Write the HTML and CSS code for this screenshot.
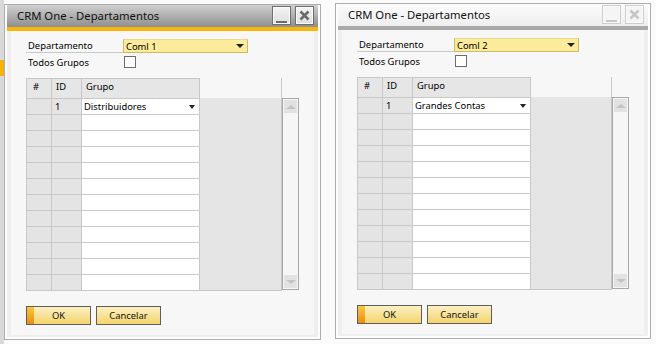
FILE: index.html
```html
<!DOCTYPE html>
<html lang="pt">
<head>
    <meta charset="UTF-8">
    <meta name="viewport" content="width=device-width, initial-scale=1.0">
    <title>CRM One - Departamentos</title>
    <link rel="stylesheet" href="styles.css">
</head>
<body>
    <div class="behind"><span class="behind-tab"></span></div>

    <!-- janela ativa -->
    <div class="win win-left">
        <div class="titlebar">
            <span class="title">CRM One - Departamentos</span>
            <span class="tbtn"><i class="min"></i></span>
            <span class="tbtn">
                <svg width="11" height="11" viewBox="0 0 11 11"><path d="M1.5 1.5 L9.5 9.5 M9.5 1.5 L1.5 9.5" stroke="currentColor" stroke-width="2.6" fill="none"/></svg>
            </span>
        </div>
        <div class="frame">
            <div class="panel">
                <div class="field">
                    <span class="lbl lbl-line">Departamento</span>
                    <div class="combo"><span>Coml 1</span><i class="arrow"></i></div>
                </div>
                <div class="field field-check">
                    <span class="lbl">Todos Grupos</span>
                    <span class="check"></span>
                </div>
                <div class="matrix">
                    <div class="cells">
                        <div class="hd hd-num">#</div><div class="hd">ID</div><div class="hd">Grupo</div>
                        <div class="rh"></div><div class="rh">1</div><div class="cell"><span>Distribuidores</span><i class="arrow arrow-sm"></i></div>
                        <div class="rh"></div><div class="rh"></div><div class="cell"></div>
                        <div class="rh"></div><div class="rh"></div><div class="cell"></div>
                        <div class="rh"></div><div class="rh"></div><div class="cell"></div>
                        <div class="rh"></div><div class="rh"></div><div class="cell"></div>
                        <div class="rh"></div><div class="rh"></div><div class="cell"></div>
                        <div class="rh"></div><div class="rh"></div><div class="cell"></div>
                        <div class="rh"></div><div class="rh"></div><div class="cell"></div>
                        <div class="rh"></div><div class="rh"></div><div class="cell"></div>
                        <div class="rh"></div><div class="rh"></div><div class="cell"></div>
                        <div class="rh"></div><div class="rh"></div><div class="cell"></div>
                        <div class="rh"></div><div class="rh"></div><div class="cell"></div>
                    </div>
                    <div class="blank"><div class="blank-head"></div><div class="blank-body"></div></div>
                    <div class="vscroll">
                        <span class="sb-btn"><i class="sb-up"></i></span>
                        <span class="sb-btn"><i class="sb-down"></i></span>
                    </div>
                </div>
                <div class="actions">
                    <button class="btn btn-ok">OK</button>
                    <button class="btn">Cancelar</button>
                </div>
            </div>
        </div>
    </div>

    <!-- janela inativa -->
    <div class="win win-right inactive">
        <div class="titlebar">
            <span class="title">CRM One - Departamentos</span>
            <span class="tbtn"><i class="min"></i></span>
            <span class="tbtn">
                <svg width="11" height="11" viewBox="0 0 11 11"><path d="M1.5 1.5 L9.5 9.5 M9.5 1.5 L1.5 9.5" stroke="currentColor" stroke-width="2.6" fill="none"/></svg>
            </span>
        </div>
        <div class="frame">
            <div class="panel">
                <div class="field">
                    <span class="lbl lbl-line">Departamento</span>
                    <div class="combo"><span>Coml 2</span><i class="arrow"></i></div>
                </div>
                <div class="field field-check">
                    <span class="lbl">Todos Grupos</span>
                    <span class="check"></span>
                </div>
                <div class="matrix">
                    <div class="cells">
                        <div class="hd hd-num">#</div><div class="hd">ID</div><div class="hd">Grupo</div>
                        <div class="rh"></div><div class="rh">1</div><div class="cell"><span>Grandes Contas</span><i class="arrow arrow-sm"></i></div>
                        <div class="rh"></div><div class="rh"></div><div class="cell"></div>
                        <div class="rh"></div><div class="rh"></div><div class="cell"></div>
                        <div class="rh"></div><div class="rh"></div><div class="cell"></div>
                        <div class="rh"></div><div class="rh"></div><div class="cell"></div>
                        <div class="rh"></div><div class="rh"></div><div class="cell"></div>
                        <div class="rh"></div><div class="rh"></div><div class="cell"></div>
                        <div class="rh"></div><div class="rh"></div><div class="cell"></div>
                        <div class="rh"></div><div class="rh"></div><div class="cell"></div>
                        <div class="rh"></div><div class="rh"></div><div class="cell"></div>
                        <div class="rh"></div><div class="rh"></div><div class="cell"></div>
                        <div class="rh"></div><div class="rh"></div><div class="cell"></div>
                    </div>
                    <div class="blank"><div class="blank-head"></div><div class="blank-body"></div></div>
                    <div class="vscroll">
                        <span class="sb-btn"><i class="sb-up"></i></span>
                        <span class="sb-btn"><i class="sb-down"></i></span>
                    </div>
                </div>
                <div class="actions">
                    <button class="btn btn-ok">OK</button>
                    <button class="btn">Cancelar</button>
                </div>
            </div>
        </div>
    </div>
</body>
</html>
```

FILE: styles.css
```css
*{
    margin: 0;
    padding: 0;
    box-sizing: border-box;
}
body{
    width: 656px;
    height: 344px;
    position: relative;
    overflow: hidden;
    background: #fbfbfb;
    font-family: "Noto Sans", "Liberation Sans", sans-serif;
    font-size: 9.4px;
    color: #000;
}
/* janela atras, so a borda aparece */
.behind{
    position: absolute;
    left: 0;
    top: 0;
    width: 4px;
    height: 344px;
    background: #d9d9d9;
}
.behind-tab{
    display: block;
    margin-top: 60px;
    height: 16px;
    background: #f4b30c;
}
.win{
    position: absolute;
    width: 317px;
    height: 336px;
    border: 1px solid #adadad;
    background: #fdfdfd;
    padding: 0 2px 2px;
    display: flex;
    flex-direction: column;
}
.win-left{
    left: 4px;
    top: 4px;
}
.win-right{
    left: 335px;
    top: 3px;
    width: 316px;
}
.titlebar{
    height: 26px;
    display: flex;
    align-items: flex-start;
    gap: 4px;
    padding-right: 4px;
    background: linear-gradient(#d0d0d0, #8e8e8e);
    border-bottom: 4px solid #f7b60c;
}
.title{
    flex: 1;
    padding-left: 10px;
    line-height: 22px;
    font-size: 11.3px;
    color: #111;
}
.tbtn{
    width: 19px;
    height: 19px;
    margin-top: 1px;
    border: 1px solid #6e6e6e;
    background: linear-gradient(#f4f4f4, #dedede);
    box-shadow: inset 0 0 0 1px #fafafa;
    color: #6b6b6b;
    display: flex;
    align-items: center;
    justify-content: center;
}
.tbtn .min{
    width: 11px;
    height: 2px;
    margin-top: 12px;
    background: currentColor;
}
.inactive .titlebar{
    background: linear-gradient(#fbfbfb, #efefef);
    border-bottom-color: #a9a9a9;
}
.inactive .tbtn{
    border-color: #cdcdcd;
    background: #f5f5f5;
    color: #c6c6c6;
}
.frame{
    flex: 1;
    background: #efefef;
    padding: 0 4px 2px;
}
.panel{
    height: 304px;
    background: #f7f7f7;
    padding: 8px 15px 10px;
}
.field{
    display: flex;
    height: 14px;
}
.field-check{
    height: 12px;
    margin-top: 3px;
}
.lbl{
    width: 97px;
    padding-left: 2px;
    line-height: 13px;
}
.lbl-line{
    border-bottom: 1px solid #c9c9c9;
}
.combo{
    width: 125px;
    height: 14px;
    display: flex;
    align-items: center;
    justify-content: space-between;
    padding: 0 3px 0 2px;
    background: #fdeb9c;
    border: 1px solid #cdb96a;
    border-top-color: #e9d98f;
}
.arrow{
    width: 0;
    height: 0;
    border-top: 4px solid #222;
    border-left: 4px solid transparent;
    border-right: 4px solid transparent;
}
.arrow-sm{
    border-left-width: 3.5px;
    border-right-width: 3.5px;
}
.check{
    width: 12px;
    height: 12px;
    margin-left: 1px;
    background: #fff;
    border: 1px solid #6d6d6d;
}
.matrix{
    display: flex;
    align-items: flex-start;
    height: 213px;
    margin-top: 10px;
}
.cells{
    display: grid;
    grid-template-columns: 24px 29px 117px;
    grid-template-rows: 19px repeat(12, 15px);
    gap: 1px;
    background: #c8c8c8;
    border: 1px solid #c8c8c8;
}
.hd{
    background: #e6e6e6;
    padding-left: 4px;
    line-height: 16px;
}
.hd-num{
    padding-left: 6px;
}
.rh{
    background: #e4e4e4;
    padding-left: 3px;
    line-height: 15px;
}
.cell{
    background: #fff;
    display: flex;
    align-items: center;
    justify-content: space-between;
    padding: 0 4px 0 2px;
}
.blank{
    width: 82px;
    height: 213px;
    display: flex;
    flex-direction: column;
    border-right: 1px solid #c8c8c8;
}
.blank-head{
    height: 20px;
}
.blank-body{
    flex: 1;
    background: #e5e5e5;
    border-bottom: 1px solid #c8c8c8;
}
.vscroll{
    width: 17px;
    height: 192px;
    margin-top: 20px;
    border: 1px solid #a8a8a8;
    background: #f6f6f6;
    padding: 1px;
    display: flex;
    flex-direction: column;
    justify-content: space-between;
}
.sb-btn{
    height: 13px;
    background: #e2e2e2;
    display: flex;
    align-items: center;
    justify-content: center;
}
.sb-up, .sb-down{
    width: 0;
    height: 0;
    border-left: 5px solid transparent;
    border-right: 5px solid transparent;
}
.sb-up{
    border-bottom: 4px solid #c4c4c4;
}
.sb-down{
    border-top: 4px solid #c4c4c4;
}
.actions{
    display: flex;
    gap: 5px;
    margin-top: 15px;
}
.btn{
    width: 65px;
    height: 19px;
    border: 1px solid #5e5e5e;
    background: linear-gradient(#fcf0c2, #f4d46c);
    font: inherit;
    color: #141414;
}
.btn-ok{
    background: linear-gradient(#fac73d, #ec8d12) no-repeat 0 0 / 7px 100%,
                linear-gradient(#fcf0c2, #f4d46c);
}
```
